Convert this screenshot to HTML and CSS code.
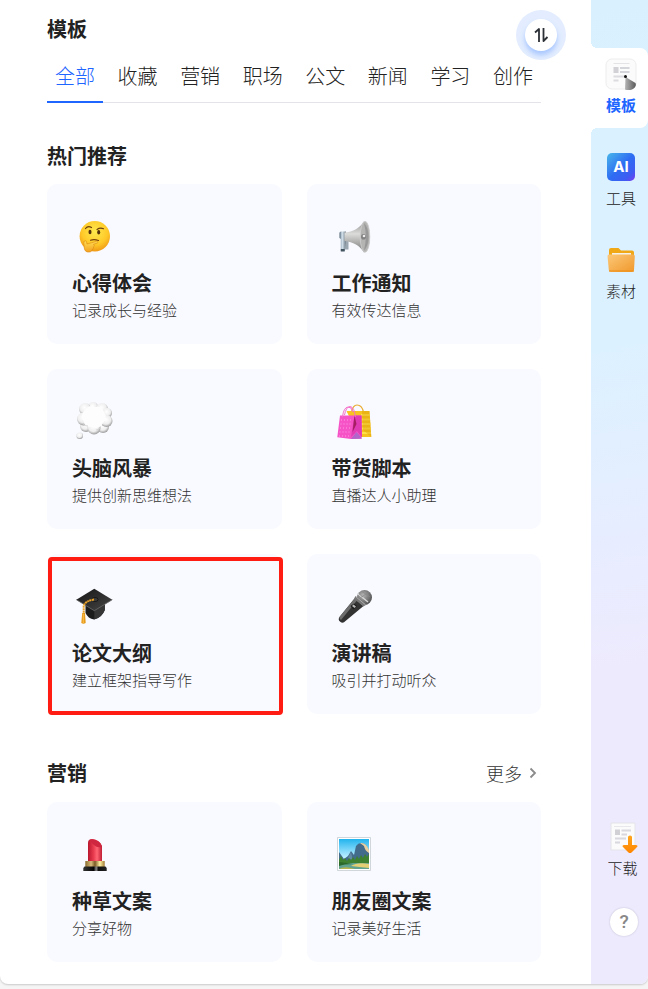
FILE: index.html
```html
<!DOCTYPE html>
<html lang="zh-CN">
<head>
    <meta charset="UTF-8">
    <meta name="viewport" content="width=device-width, initial-scale=1.0">
    <title>模板</title>
    <link rel="stylesheet" href="styles.css">
</head>
<body>

<div class="app">
    <main class="panel">
        <h1 class="title">模板</h1>
        <button class="switch" aria-label="切换">
            <span class="switch-inner">
                <svg width="16" height="16" viewBox="0 0 16 16" fill="none" stroke="#2b2f36" stroke-width="1.800" stroke-linejoin="round">
                    <path d="M2 5.500L6 2V15"/>
                    <path d="M10.500 1V14L14.500 10"/>
                </svg>
            </span>
        </button>

        <nav class="tabs">
            <button class="tab active">全部</button>
            <button class="tab">收藏</button>
            <button class="tab">营销</button>
            <button class="tab">职场</button>
            <button class="tab">公文</button>
            <button class="tab">新闻</button>
            <button class="tab">学习</button>
            <button class="tab">创作</button>
        </nav>

        <!-- 热门推荐 -->
        <section class="section">
            <div class="section-head">
                <h2>热门推荐</h2>
            </div>
            <div class="cards">
                <button class="card">
                    <svg class="card-icon" viewBox="0 0 36 36">
                        <defs>
                            <radialGradient id="face" cx=".5" cy=".35" r=".65">
                                <stop offset="0" stop-color="#ffe94e"/>
                                <stop offset=".65" stop-color="#ffc928"/>
                                <stop offset="1" stop-color="#f09a16"/>
                            </radialGradient>
                            <linearGradient id="hand" x1="0" y1="0" x2="0" y2="1">
                                <stop offset="0" stop-color="#ffdf56"/>
                                <stop offset="1" stop-color="#f3a01e"/>
                            </linearGradient>
                        </defs>
                        <circle cx="18.800" cy="18.200" r="15.200" fill="url(#face)"/>
                        <path d="M9.500 10.500Q12 7.200 15.500 9.500M21 11.500Q24 9.300 27.500 10.700" fill="none" stroke="#6b3f0d" stroke-width="1.200" stroke-linecap="round"/>
                        <ellipse cx="14" cy="14" rx="1.500" ry="2.200" fill="#54300b"/>
                        <ellipse cx="22.700" cy="14.300" rx="1.500" ry="2.200" fill="#54300b"/>
                        <path d="M14.500 22.300Q18 20.800 22.500 22.500" fill="none" stroke="#7a4309" stroke-width="1.100" stroke-linecap="round"/>
                        <path d="M8 27.500C7.500 24.500 8 22.600 9.300 22.700C10.700 22.800 10.600 24.400 11 26L20.500 23.300C22.200 23 22.400 24.700 20.800 25.200L17.500 26.400C18.800 27 18.400 28.500 17.300 29C17.900 30 17.300 31 16.300 31.300C16 33.700 14 34.300 11.500 34C8.800 33.600 8.200 31 8 27.500Z" fill="url(#hand)" stroke="#dc8712" stroke-width=".6"/>
                    </svg>
                    <span class="card-title">心得体会</span>
                    <span class="card-desc">记录成长与经验</span>
                </button>
                <button class="card">
                    <svg class="card-icon" viewBox="0 0 36 36">
                        <defs>
                            <linearGradient id="horn" x1="0" y1="0" x2="0" y2="1">
                                <stop offset="0" stop-color="#8f8f8f"/>
                                <stop offset=".4" stop-color="#dcdcda"/>
                                <stop offset="1" stop-color="#767676"/>
                            </linearGradient>
                            <linearGradient id="grip">
                                <stop offset="0" stop-color="#4c5f70"/>
                                <stop offset=".4" stop-color="#d9e8f2"/>
                                <stop offset="1" stop-color="#66757f"/>
                            </linearGradient>
                        </defs>
                        <path d="M9 21H12.500V31.500H9Z" fill="#9aa7b1"/>
                        <path d="M3.500 15Q3.500 13.500 5 13.500H10V22L8.700 33H4.800V21L3.500 20Z" fill="url(#grip)"/>
                        <path d="M4.800 31H8.700V33.500H4.800Z" fill="#435460"/>
                        <path d="M8.500 14.500C17 14 24 9.500 28 3.400Q34 7 34 18.500Q34 31 28 34.500C24 27.500 17 24 8.500 23Z" fill="url(#horn)"/>
                        <ellipse cx="29" cy="18.800" rx="4.800" ry="15.500" fill="#b4b4b3" stroke="#cfcfcf" stroke-width=".8"/>
                        <path d="M28 5Q32.500 9 32.600 18.800Q32.500 28 28 32.500Q29.800 25 29.800 18.800Q29.800 12 28 5Z" fill="#989898"/>
                        <ellipse cx="27.500" cy="18.800" rx="2.500" ry="2.800" fill="#828282"/>
                        <circle cx="28" cy="18" r="1.300" fill="#ededed"/>
                    </svg>
                    <span class="card-title">工作通知</span>
                    <span class="card-desc">有效传达信息</span>
                </button>
                <button class="card">
                    <svg class="card-icon" viewBox="0 0 36 36">
                        <defs>
                            <radialGradient id="puff" cx=".45" cy=".38" r=".65">
                                <stop offset="0" stop-color="#ffffff"/>
                                <stop offset=".6" stop-color="#eeeeee"/>
                                <stop offset="1" stop-color="#8f8f8f"/>
                            </radialGradient>
                        </defs>
                        <g fill="url(#puff)">
                            <circle cx="17" cy="4" r="5"/>
                            <circle cx="9" cy="6" r="6"/>
                            <circle cx="26" cy="6" r="6"/>
                            <circle cx="31" cy="10" r="5"/>
                            <circle cx="10" cy="23" r="6"/>
                            <circle cx="27" cy="24" r="6"/>
                            <circle cx="7.500" cy="16" r="6.500"/>
                            <circle cx="30.500" cy="18" r="6"/>
                            <circle cx="18" cy="25" r="6.500"/>
                            <circle cx="3.700" cy="32.700" r="3.200"/>
                        </g>
                        <path d="M8 8Q13 1 19 4Q26 3 28 9Q32 15 27 20Q23 27 16 24Q8 24 8 19Q4 13 8 8Z" fill="#fdfdfd"/>
                        <path d="M12 23Q9 23 7 21M24 25Q22 27 20 27" fill="none" stroke="#cfcfcf" stroke-width=".8"/>
                    </svg>
                    <span class="card-title">头脑风暴</span>
                    <span class="card-desc">提供创新思维想法</span>
                </button>
                <button class="card">
                    <svg class="card-icon" viewBox="0 0 36 36">
                        <path d="M15.500 9Q17 2 21 2Q26 2 27.500 9" fill="none" stroke="#e8ad35" stroke-width="1.200"/>
                        <path d="M10.500 8H33.500L35.300 34H24V36Z" fill="#f6c320"/>
                        <path d="M25 12H33.800M25 16.500H34M25 21H34.400M25 25.500H34.700M25 30H35" stroke="#ffe14a" stroke-width="1.800"/>
                        <path d="M26 8L27 27L35.300 34L33.500 8Z" fill="#d99b08" opacity=".4"/>
                        <path d="M4 12.500H25.500V35.700L15 36L1.300 34.300Z" fill="#f553c6"/>
                        <path d="M18.500 12.500L15 34L21 28L26 34.500L25.500 12.500Z" fill="#e03ab5"/>
                        <path d="M18.500 12.500L16.500 29L20.500 21Z" fill="#a41e61"/>
                        <path d="M15 36L20.500 29L26 35.500Z" fill="#b065ca"/>
                        <path d="M5 17H17M4.500 21H16M4 25H16M3.500 29H15M3 33H14" stroke="#ff9ce6" stroke-width="1" stroke-dasharray="1 2"/>
                        <path d="M6.500 14Q7.500 4.500 12 4Q15.500 3.500 17 9M8.500 12Q10 4 14 3.500Q18.500 4 19.300 14" fill="none" stroke="#f471c9" stroke-width="1"/>
                    </svg>
                    <span class="card-title">带货脚本</span>
                    <span class="card-desc">直播达人小助理</span>
                </button>
                <button class="card marked">
                    <svg class="card-icon" viewBox="0 0 36 36">
                        <defs>
                            <linearGradient id="cap" x1="0" y1="0" x2="1" y2="1">
                                <stop offset="0" stop-color="#151515"/>
                                <stop offset="1" stop-color="#474747"/>
                            </linearGradient>
                        </defs>
                        <path d="M9.500 16V25Q12 30.500 18 31.500Q26 29.500 28.800 22V15Z" fill="#1c1c1c"/>
                        <path d="M18.300 22V31.500Q26 29.500 28.800 22V15Z" fill="#363636"/>
                        <path d="M18.300 .7L36.300 11.700L18.300 22.700L.3 11.700Z" fill="url(#cap)"/>
                        <path d="M.3 11.700L18.300 22.700L36.300 11.700" fill="none" stroke="#6a6a6a" stroke-width=".8"/>
                        <ellipse cx="19" cy="11.500" rx="3" ry="2" fill="#3c3c3c" stroke="#101010" stroke-width=".8"/>
                        <path d="M18 11.500Q9 13 7.700 18V25" fill="none" stroke="#e9a128" stroke-width="2" stroke-dasharray="2 .5"/>
                        <path d="M6.200 25H9L9.700 35Q7.500 36.500 5.300 35Z" fill="#e69a1c"/>
                        <path d="M7.300 26V35" stroke="#ffc95a" stroke-width=".8"/>
                    </svg>
                    <span class="card-title">论文大纲</span>
                    <span class="card-desc">建立框架指导写作</span>
                </button>
                <button class="card">
                    <svg class="card-icon" viewBox="0 0 36 36">
                        <defs>
                            <radialGradient id="mic" cx=".4" cy=".35" r=".7">
                                <stop offset="0" stop-color="#b5b5b5"/>
                                <stop offset="1" stop-color="#4c4c4c"/>
                            </radialGradient>
                        </defs>
                        <path d="M18.500 10.500L27.500 18L9.500 33Q7 36 4.200 33.800Q1.500 31.500 3.700 28.700Z" fill="#333"/>
                        <path d="M18.500 10.500L21 12.500L5 32Q3 31 3.700 28.700Z" fill="#6d6d6d"/>
                        <circle cx="28.500" cy="9.500" r="7.500" fill="url(#mic)"/>
                        <path d="M19.500 8L30.500 16.500L27.500 18.500L18 10.700Z" fill="#777"/>
                        <path d="M21.500 5.500L32 14" stroke="#d8d8d8" stroke-width="1.400"/>
                        <path d="M19.500 8.500L29.500 16.800" stroke="#a9a9a9" stroke-width="1"/>
                        <path d="M23 6L27 9M26 3.500L34 9M24 10L33 4" stroke="#888" stroke-width=".7"/>
                        <path d="M14.500 18L18 15.500L21 18L17.500 21.500Z" fill="#1c1c1c"/>
                        <path d="M17.500 16.500L20 18.500L18.500 20L16 18Z" fill="#b8b8b8"/>
                    </svg>
                    <span class="card-title">演讲稿</span>
                    <span class="card-desc">吸引并打动听众</span>
                </button>
            </div>
        </section>

        <!-- 营销 -->
        <section class="section">
            <div class="section-head">
                <h2>营销</h2>
                <a class="more" href="#">更多
                    <svg width="16" height="16" viewBox="0 0 16 16" fill="none" stroke="#8a8a8a" stroke-width="1.800">
                        <path d="M5.500 3.500L10 8L5.500 12.500"/>
                    </svg>
                </a>
            </div>
            <div class="cards">
                <button class="card">
                    <svg class="card-icon" viewBox="0 0 36 36">
                        <defs>
                            <linearGradient id="stick">
                                <stop offset="0" stop-color="#b9172e"/>
                                <stop offset=".4" stop-color="#e93b4f"/>
                                <stop offset=".65" stop-color="#ff6573"/>
                                <stop offset="1" stop-color="#c01e34"/>
                            </linearGradient>
                            <linearGradient id="gold">
                                <stop offset="0" stop-color="#8a6b2f"/>
                                <stop offset=".3" stop-color="#d6bb7c"/>
                                <stop offset=".5" stop-color="#7b5b25"/>
                                <stop offset=".75" stop-color="#fff1a4"/>
                                <stop offset="1" stop-color="#a37b32"/>
                            </linearGradient>
                            <linearGradient id="base">
                                <stop offset="0" stop-color="#333"/>
                                <stop offset=".45" stop-color="#060606"/>
                                <stop offset=".55" stop-color="#8a8a8a"/>
                                <stop offset=".65" stop-color="#111"/>
                                <stop offset="1" stop-color="#222"/>
                            </linearGradient>
                        </defs>
                        <path d="M12 25V7Q12 3 16 3Q24 4 26 10V25Z" fill="url(#stick)"/>
                        <path d="M14 4Q17 2 22 5Q26 8 25.500 11Q21 12 18 9Q15 7 14 4Z" fill="#cf2740"/>
                        <path d="M9.300 25H28.700V31H9.300Z" fill="url(#gold)"/>
                        <path d="M8.500 30.500H29.500L30.700 32V35H7.300V32Z" fill="url(#base)"/>
                    </svg>
                    <span class="card-title">种草文案</span>
                    <span class="card-desc">分享好物</span>
                </button>
                <button class="card">
                    <svg class="card-icon" viewBox="0 0 36 36">
                        <defs>
                            <linearGradient id="sky" x1="0" y1="0" x2="0" y2="1">
                                <stop offset="0" stop-color="#22b4ee"/>
                                <stop offset=".6" stop-color="#b9edff"/>
                            </linearGradient>
                        </defs>
                        <path d="M1.500 1.500H34.500V34.500H1.500Z" fill="#fff" stroke="#c5ccd2" stroke-width=".8"/>
                        <path d="M3 3H33V33H3Z" fill="url(#sky)"/>
                        <path d="M3 16L8 23L12 20L15 15L18 19L20 10Q23 6 27 7.500Q31 8 33 15V27H3Z" fill="#436b8b"/>
                        <path d="M24 7Q30 6 33 14V17Q29 15 28 10Z" fill="#e9d0a0"/>
                        <path d="M12 22L15 16L17 25Z" fill="#628aa6"/>
                        <path d="M3 24L5 20L7 24L9 22L11 25L13 22L15 24L17 21L19 24L21 20L23 23L25 19L27 22L29 18L31 21L33 18V28H3Z" fill="#3e8131"/>
                        <path d="M3 27H33V33H3Z" fill="#62a38f"/>
                        <path d="M15 30Q21 26 33 28V32Q23 31 15 30Z" fill="#e4cf75"/>
                        <path d="M3 26Q11 27 17 28Q8 28 3 30Z" fill="#2c6a2b"/>
                        <path d="M3 33Q8 30 15 32L19 33Z" fill="#b7b54e"/>
                    </svg>
                    <span class="card-title">朋友圈文案</span>
                    <span class="card-desc">记录美好生活</span>
                </button>
            </div>
        </section>
    </main>

    <aside class="sidebar">
        <button class="side-item active">
            <svg width="32" height="32" viewBox="0 0 32 32">
                <defs>
                    <linearGradient id="pen">
                        <stop offset="0" stop-color="#b5b5b5"/>
                        <stop offset="1" stop-color="#5a5a5a"/>
                    </linearGradient>
                </defs>
                <rect x="1" y="1" width="30" height="30" rx="6" fill="#fbfbfb" stroke="#ededed"/>
                <path d="M8.500 5.500H24.500" stroke="#e3e3e5"/>
                <rect x="8.500" y="9" width="5" height="6" fill="#d2d2d6"/>
                <path d="M15 10H24.500M15 14H24.500" stroke="#d4d4db" stroke-width="2"/>
                <path d="M8.500 18.500H20M8.500 22.500H13.500" stroke="#dcdce0" stroke-width="2"/>
                <path d="M20.500 19L30.500 25Q32 29 27 31.500Q23 33 20 31.500Z" fill="url(#pen)"/>
                <circle cx="20.500" cy="18.500" r="1.500" fill="#111"/>
            </svg>
            <span>模板</span>
        </button>
        <button class="side-item">
            <svg width="32" height="32" viewBox="0 0 32 32">
                <defs>
                    <linearGradient id="ai" x1="0" y1="0" x2="1" y2="1">
                        <stop offset="0" stop-color="#49b7e9"/>
                        <stop offset=".5" stop-color="#2e6df3"/>
                        <stop offset=".8" stop-color="#3e5cf2"/>
                        <stop offset="1" stop-color="#7c3df0"/>
                    </linearGradient>
                </defs>
                <rect x="2" y="2" width="28" height="28" rx="5" fill="url(#ai)"/>
                <text class="ai-text" x="16" y="21" text-anchor="middle">AI</text>
            </svg>
            <span>工具</span>
        </button>
        <button class="side-item">
            <svg width="32" height="32" viewBox="0 0 32 32">
                <defs>
                    <linearGradient id="folder" x1="0" y1="0" x2="1" y2="1">
                        <stop offset="0" stop-color="#fcc878"/>
                        <stop offset="1" stop-color="#f0982b"/>
                    </linearGradient>
                </defs>
                <path d="M4 6Q4 4 6 4H13.500L16 6.500H27Q29 6.500 29 8.500V16H4Z" fill="#f0a817"/>
                <path d="M7 9H26V14H7Z" fill="#f6f0e5"/>
                <path d="M2.500 12Q2.500 10.500 4 10.500H28Q30 10.500 29.800 12.500L29 26Q29 28 27 28H6Q4 28 3.800 26Z" fill="url(#folder)"/>
                <path d="M4 27H29" stroke="#ed8d13"/>
            </svg>
            <span>素材</span>
        </button>

        <div class="side-bottom">
            <button class="side-item">
                <svg width="32" height="32" viewBox="0 0 32 32">
                    <defs>
                        <linearGradient id="down" x1="0" y1="0" x2="0" y2="1">
                            <stop offset="0" stop-color="#ffa51f"/>
                            <stop offset="1" stop-color="#ff8500"/>
                        </linearGradient>
                    </defs>
                    <path d="M4 2H28V29H4Z" fill="#fbfbfc" stroke="#e4e3e8"/>
                    <path d="M7 5.500H24" stroke="#e8e8ec"/>
                    <path d="M8 8.500H13V14H8Z" fill="#d0d0d5"/>
                    <path d="M14.500 9.500H24M14.500 13.500H20M8 17.500H19M8 21.500H13" stroke="#d8d8de" stroke-width="2"/>
                    <path d="M21 16Q21 14.500 23 14.500Q25 14.500 25 16V24L28.500 24Q31.500 24 30 26L24.500 31.500Q23 33 21.500 31.500L16 26Q14.500 24 17.500 24H21Z" fill="url(#down)"/>
                </svg>
                <span>下载</span>
            </button>
            <button class="help">?</button>
        </div>
    </aside>
</div>

</body>
</html>
```
FILE: styles.css
```css
* {
    box-sizing: border-box;
}

body {
    margin: 0;
    padding-bottom: 5px;
    background: #f5f5f5;
    color: #222;
    font-family: "Noto Sans CJK SC", sans-serif;
}

button {
    margin: 0;
    padding: 0;
    border: none;
    background: none;
    color: inherit;
    font-family: inherit;
    cursor: pointer;
}

h1,
h2 {
    margin: 0;
    font-size: 20px;
    line-height: 28px;
    font-weight: 700;
}

.app {
    display: flex;
    min-height: calc(100vh - 5px);
    background: #fff;
    border-radius: 0 0 8px 8px;
    box-shadow: 0 1px 2px rgba(0, 0, 0, 0.18);
}

.panel {
    position: relative;
    flex: 1;
    padding: 15px 50px 22px 47px;
}

/* 右上角悬浮按钮 */
.switch {
    position: absolute;
    top: 10px;
    right: 25px;
    padding: 9px;
    border-radius: 50%;
    background: #e3edff;
}

.switch-inner {
    display: flex;
    align-items: center;
    justify-content: center;
    width: 32px;
    height: 32px;
    border-radius: 50%;
    background: #fff;
    box-shadow: 0 4px 5px rgba(60, 130, 255, 0.35);
}

.tabs {
    display: flex;
    justify-content: space-between;
    margin-top: 19px;
    border-bottom: 1px solid #e3e4ea;
}

.tab {
    margin-bottom: -1px;
    padding: 0 8px 11px;
    border-bottom: 2px solid transparent;
    font-size: 20px;
    line-height: 28px;
    font-weight: 300;
}

.tab.active {
    color: #1e66ff;
    border-bottom-color: #1e66ff;
}

/* 模板分组 */
.section {
    margin-top: 39px;
}

.section + .section {
    margin-top: 45px;
}

.section-head {
    display: flex;
    align-items: center;
    justify-content: space-between;
    margin-bottom: 14px;
}

.section + .section .section-head {
    margin-bottom: 15px;
}

.more {
    display: flex;
    align-items: center;
    gap: 3px;
    color: #333;
    font-size: 18px;
    line-height: 28px;
    font-weight: 300;
    text-decoration: none;
}

.cards {
    display: grid;
    grid-template-columns: 1fr 1fr;
    gap: 25px;
}

.card {
    position: relative;
    display: flex;
    flex-direction: column;
    align-items: flex-start;
    padding: 34px 25px 22px;
    border-radius: 10px;
    background: #f9faff;
    text-align: left;
}

.card-icon {
    width: 36px;
    height: 36px;
    margin: 0 4px 15px;
    overflow: visible;
}

.card-title {
    font-size: 20px;
    line-height: 28px;
    font-weight: 700;
}

.card-desc {
    margin-top: 1px;
    color: #333;
    font-size: 15px;
    line-height: 24px;
    font-weight: 300;
}

/* 红框标记 */
.card.marked::after {
    content: "";
    position: absolute;
    top: 3px;
    right: -1px;
    bottom: -1px;
    left: 1px;
    border: 4px solid #ff1c12;
    border-radius: 4px;
}

/* 右侧导航 */
.sidebar {
    display: flex;
    flex-direction: column;
    gap: 13px;
    width: 57px;
    padding: 48px 0;
    border-radius: 0 0 8px 0;
    background: linear-gradient(170deg, #d9f1ff 0%, #dcf1ff 35%, #eeeafe 68%, #eeeafe 100%);
}

.side-item {
    position: relative;
    display: flex;
    flex-direction: column;
    align-items: center;
    gap: 3px;
    padding: 10px 0 11px 3px;
    color: #222;
    font-size: 15px;
    line-height: 24px;
    font-weight: 300;
}

.side-item svg {
    display: block;
}

.side-item.active {
    background: #fff;
    border-radius: 0 8px 8px 0;
    color: #1e66ff;
    font-weight: 700;
}

.side-item.active::before,
.side-item.active::after {
    content: "";
    position: absolute;
    left: 0;
    width: 6px;
    height: 6px;
}

.side-item.active::before {
    bottom: 100%;
    background: radial-gradient(circle at 100% 0, transparent 6px, #fff 6px);
}

.side-item.active::after {
    top: 100%;
    background: radial-gradient(circle at 100% 100%, transparent 6px, #fff 6px);
}

.ai-text {
    fill: #fff;
    font-family: Inter, sans-serif;
    font-size: 15px;
    font-weight: 700;
}

.side-bottom {
    display: flex;
    flex-direction: column;
    align-items: center;
    gap: 17px;
    margin-top: auto;
    padding-left: 3px;
}

.help {
    width: 28px;
    height: 28px;
    margin-left: 6px;
    border-radius: 50%;
    background: #fff;
    box-shadow: 0 0 2px rgba(0, 0, 0, 0.2);
    color: #888;
    font-family: Roboto, sans-serif;
    font-size: 19px;
    line-height: 28px;
    font-weight: 500;
}
```
